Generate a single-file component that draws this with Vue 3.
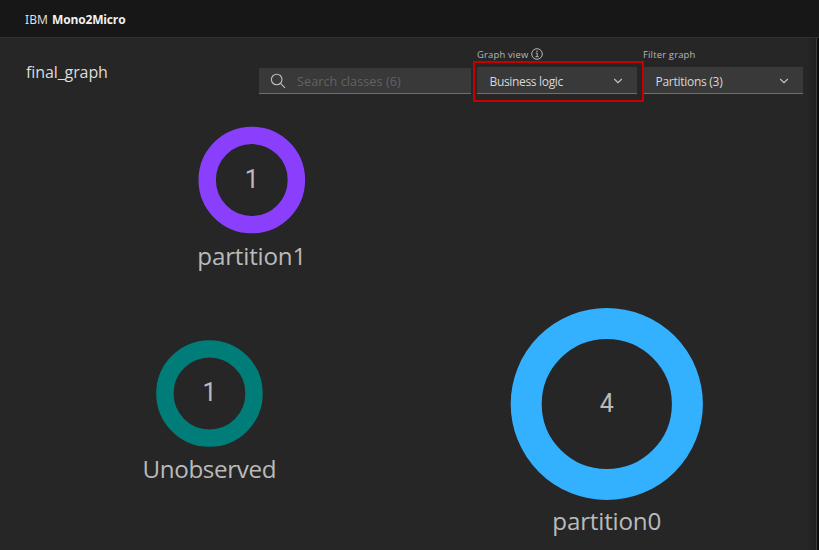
<script setup>
const nodes = [
  { name: 'partition1', count: 1, cx: 251.8, cy: 180, r: 44.6, w: 17.4, color: '#8a3ffc', labelW: 109, countY: 188, labelY: 265 },
  { name: 'Unobserved', count: 1, cx: 209.5, cy: 393.5, r: 44.6, w: 17.4, color: '#007d79', labelW: 134, countY: 401, labelY: 478 },
  { name: 'partition0', count: 4, cx: 606.8, cy: 404, r: 80.6, w: 31, color: '#33b1ff', labelW: 109, countY: 411.5, labelY: 530 }
]
</script>

<template>
  <div class="app">
    <header class="header"><span class="brand">IBM</span><b>Mono2Micro</b></header>
    <div class="body">
      <main class="panel">
        <div class="toolbar">
          <h1>final_graph</h1>
          <div class="field search">
            <svg width="16" height="16" viewBox="0 0 16 16" fill="none" stroke="#c0c0c0" stroke-width="1.1">
              <circle cx="6.7" cy="6.5" r="5.3" /><path d="M10.5 10.4 15 14.9" />
            </svg>
            <span class="placeholder">Search classes (6)</span>
          </div>
          <div class="group view">
            <label>Graph view
              <svg class="info" width="12" height="12" viewBox="0 0 12 12" fill="none" stroke="#c6c6c6">
                <circle cx="6" cy="6" r="5.3" stroke-width=".9" />
                <path d="M4.8 5.2H6.2V8.6M4.5 8.7H7.6" stroke-width=".9" /><circle cx="6" cy="3.3" r=".7" fill="#c6c6c6" stroke="none" />
              </svg>
            </label>
            <div class="field select">
              <span class="business">Business logic</span>
              <svg width="10" height="6" viewBox="0 0 10 6" fill="none" stroke="#c6c6c6" stroke-width="1.1"><path d="M1.2 1 5 4.7 8.8 1" /></svg>
            </div>
            <div class="highlight"></div>
          </div>
          <div class="group filter">
            <label>Filter graph</label>
            <div class="field select">
              <span class="parts">Partitions (3)</span>
              <svg width="10" height="6" viewBox="0 0 10 6" fill="none" stroke="#c6c6c6" stroke-width="1.1"><path d="M1.2 1 5 4.7 8.8 1" /></svg>
            </div>
          </div>
        </div>
        <svg class="graph" width="812" height="440" viewBox="0 107 812 440">
          <g v-for="n in nodes" :key="n.name">
            <circle :cx="n.cx" :cy="n.cy" :r="n.r" fill="none" :stroke="n.color" :stroke-width="n.w" />
            <text class="count" :x="n.cx" :y="n.countY">{{ n.count }}</text>
            <text class="label" :x="n.cx" :y="n.labelY" :textLength="n.labelW">{{ n.name }}</text>
          </g>
        </svg>
      </main>
      <aside class="edge"></aside>
    </div>
  </div>
</template>

<style>
body { margin: 0; overflow: hidden; background: #262626; }
</style>

<style scoped>
* { box-sizing: border-box; }
.app { width: 819px; height: 550px; display: flex; flex-direction: column; background: #262626; color: #d8d8d8; font-family: "Open Sans", "Noto Sans", sans-serif; overflow: hidden; }
.header { height: 38px; flex: none; display: flex; align-items: center; gap: 4px; padding: 2px 0 0 25px; background: #171717; border-bottom: 1px solid #303030; font-size: 12px; color: #f0f0f0; }
.brand { width: 23px; font-family: "Noto Sans", sans-serif; letter-spacing: .1px; color: #dedede; }
.header b { font-weight: 700; font-size: 12px; letter-spacing: -.15px; }
.body { flex: 1; display: flex; min-height: 0; }
.panel { flex: 1; min-width: 0; display: flex; flex-direction: column; background: linear-gradient(to right, #262626 98.8%, #202020); }
.toolbar { height: 69px; flex: none; display: flex; align-items: flex-start; padding: 9px 0 0 26px; }
h1 { width: 232.5px; margin: 13px 0 0; font-size: 16px; line-height: 24px; font-weight: 400; letter-spacing: -.1px; color: #dcdcdc; flex: none; }
.field { display: flex; align-items: center; background: #393939; border-bottom: 1px solid #707070; font-size: 12px; white-space: nowrap; }
.search { width: 212px; margin: 21px 6px 0 0; height: 26px; padding: 1px 0 0 11px; gap: 11.5px; flex: none; }
.placeholder { color: #626262; font-size: 12.6px; letter-spacing: .08px; }
.group { position: relative; flex: none; }
.view { width: 160px; margin-right: 6px; }
.filter { width: 160px; }
label { display: flex; align-items: center; gap: 3px; height: 14px; margin-bottom: 6px; padding-left: .5px; font-size: 9.4px; letter-spacing: .2px; color: #b8b8b8; white-space: nowrap; }
.select { height: 27px; justify-content: space-between; padding: 2px 14px 0 13px; }
.business { letter-spacing: -.33px; }
.parts { letter-spacing: -.27px; }
.highlight { position: absolute; left: -4px; top: 14px; width: 171px; height: 41px; border: 2px solid #c40000; z-index: 1; }
.edge { width: 3px; background: #0c0c0c; border-left: 1px solid #3b3b3b; }
.graph { display: block; flex: none; }
.count, .label { text-anchor: middle; fill: #bababa; }
.count { font-family: Roboto, sans-serif; font-size: 25px; }
.label { font-size: 24.2px; }
</style>
